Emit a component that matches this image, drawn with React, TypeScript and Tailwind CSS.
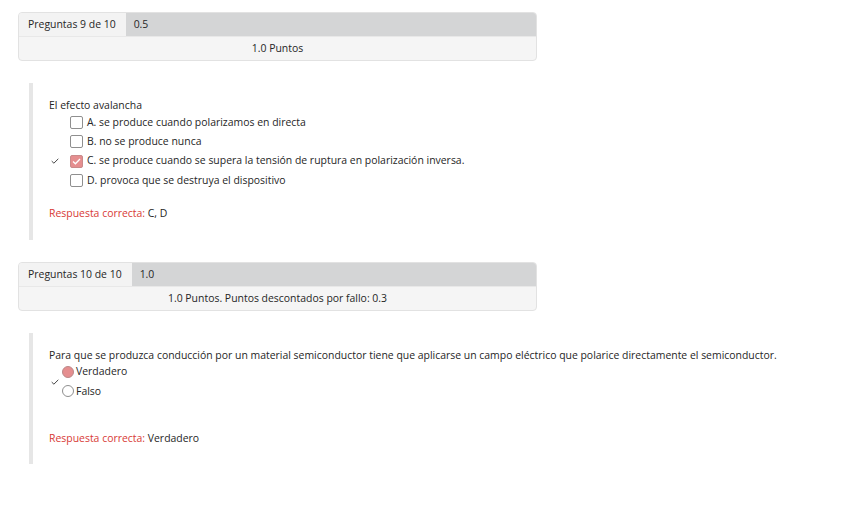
import React from "react";

const font = { fontFamily: '"Open Sans", "Liberation Sans", sans-serif' };

function Tick() {
  return (
    <svg width="8" height="6" viewBox="0 0 8 6" className="block">
      <path d="M0.7 3.1 L2.9 5.2 L7.3 0.8" fill="none" stroke="#444" strokeWidth="1" />
    </svg>
  );
}

function Box({ checked }: { checked?: boolean }) {
  return checked ? (
    <span className="grid h-[13px] w-[13px] place-items-center rounded-[2px] border border-[#c98a8a] bg-[#e58e8f]">
      <svg width="9" height="7" viewBox="0 0 9 7">
        <path d="M1 3.6 L3.4 5.8 L8 1" fill="none" stroke="#fff" strokeWidth="1.3" />
      </svg>
    </span>
  ) : (
    <span className="h-[13px] w-[13px] rounded-[2px] border border-[#8f8f8f] bg-white" />
  );
}

function Radio({ checked }: { checked?: boolean }) {
  return checked ? (
    <span className="h-[12px] w-[12px] rounded-full border border-[#b88] bg-[#e58e8f]" />
  ) : (
    <span className="h-[12px] w-[12px] rounded-full border border-[#8f8f8f] bg-white" />
  );
}

function Header({ label, value, points }: { label: string; value: string; points: string }) {
  return (
    <div className="ml-[18px] w-[519px] overflow-hidden rounded-[4px] border border-[#e2e2e2] bg-[#f5f5f5]">
      <div className="flex h-[24px] border-b border-[#e8e8e8]">
        <div className="flex items-center bg-[#f3f3f3] pl-[9px] pr-[10px]">{label}</div>
        <div className="flex flex-1 items-center bg-[#d4d5d6] pl-[8px]">{value}</div>
      </div>
      <div className="flex h-[23px] items-center justify-center">{points}</div>
    </div>
  );
}

const options = [
  { t: "A. se produce cuando polarizamos en directa" },
  { t: "B. no se produce nunca" },
  { t: "C. se produce cuando se supera la tensión de ruptura en polarización inversa.", checked: true },
  { t: "D. provoca que se destruya el dispositivo" },
];

export default function App() {
  return (
    <div className="min-h-[508px] w-[848px] bg-white pt-[12px] text-[10.45px] text-[#262626]" style={font}>
      <Header label="Preguntas 9 de 10" value="0.5" points="1.0 Puntos" />

      <div className="ml-[29px] mt-[22px] border-l-4 border-[#e6e6e6] pb-[18px] pl-[16px] pt-[14px]">
        <div className="leading-[17px]">El efecto avalancha</div>
        <div className="-mt-[1px]">
          {options.map((o) => (
            <div key={o.t} className="flex h-[19.3px] items-center">
              <span className="flex w-[21px] justify-start pl-[2px]">{o.checked && <Tick />}</span>
              <Box checked={o.checked} />
              <span className="ml-[4px]">{o.t}</span>
            </div>
          ))}
        </div>
        <div className="mt-[15px] leading-[17px]">
          <span className="text-[#d83a36]">Respuesta correcta: </span>C, D
        </div>
      </div>

      <div className="mt-[22px]">
        <Header label="Preguntas 10 de 10" value="1.0" points="1.0 Puntos. Puntos descontados por fallo: 0.3" />
      </div>

      <div className="ml-[29px] mt-[22px] border-l-4 border-[#e6e6e6] pb-[17px] pl-[16px] pt-[14px]">
        <div className="leading-[17px]">
          Para que se produzca conducción por un material semiconductor tiene que aplicarse un campo eléctrico que polarice directamente el semiconductor.
        </div>
        <div className="-mt-[2px] flex items-center">
          <span className="w-[13px] pl-[2px]">
            <Tick />
          </span>
          <div>
            <div className="flex h-[19.5px] items-center gap-[2px]">
              <Radio checked />
              <span>Verdadero</span>
            </div>
            <div className="flex h-[19.5px] items-center gap-[2px]">
              <Radio />
              <span>Falso</span>
            </div>
          </div>
        </div>
        <div className="mt-[29px] leading-[17px]">
          <span className="text-[#d83a36]">Respuesta correcta: </span>Verdadero
        </div>
      </div>
    </div>
  );
}
